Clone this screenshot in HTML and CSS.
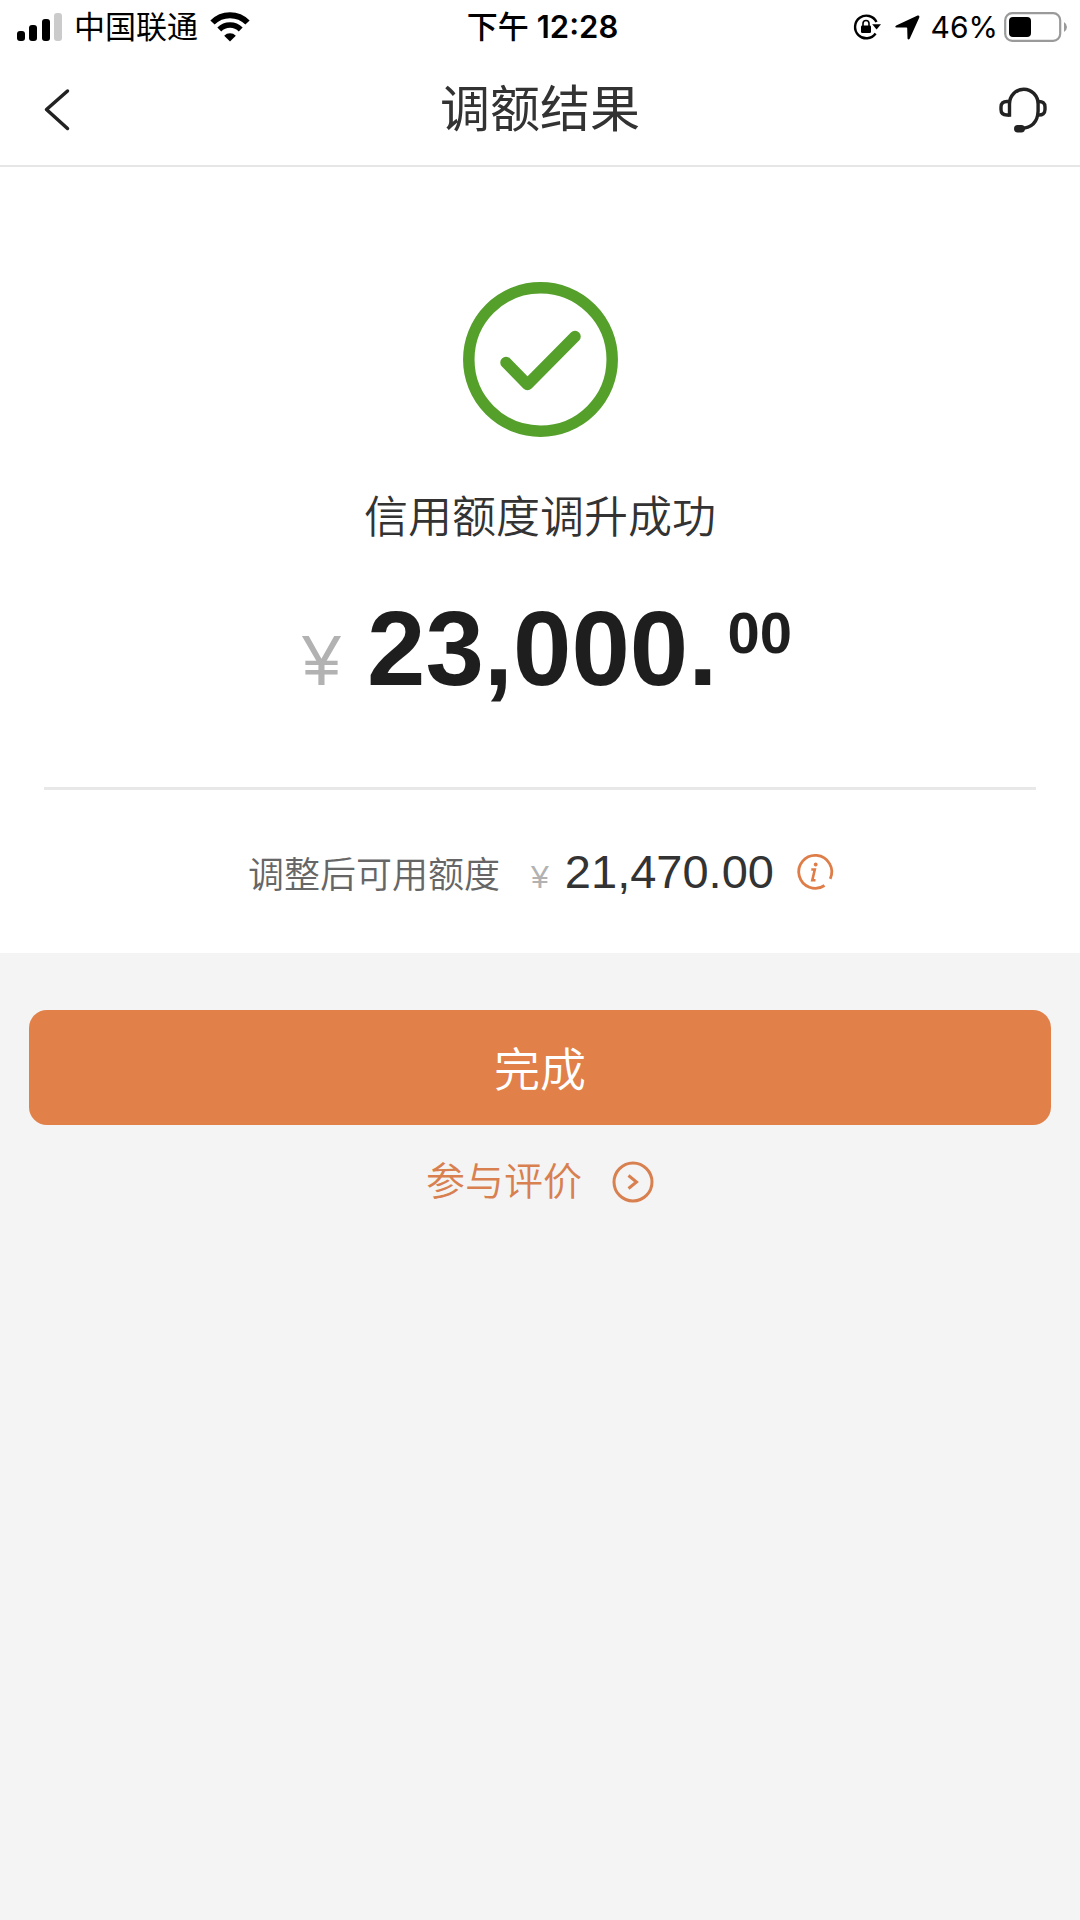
FILE: index.html
```html
<!DOCTYPE html>
<html lang="zh-CN">
<head>
<meta charset="utf-8">
<meta name="viewport" content="width=device-width, initial-scale=1">
<title>调额结果</title>
<link rel="stylesheet" href="styles.css">
</head>
<body>
<div class="status-bar">
  <div class="status-left">
    <svg class="signal" viewBox="0 0 45 28" width="45" height="28" aria-hidden="true">
      <rect x="0" y="18" width="8" height="10" rx="3"/>
      <rect x="12" y="12" width="8" height="16" rx="3"/>
      <rect x="25" y="6" width="8" height="22" rx="3"/>
      <rect x="37" y="0" width="8" height="28" rx="3" fill="#cbcbcb"/>
    </svg>
    <span class="carrier">中国联通</span>
    <svg class="wifi" viewBox="0 0 40 30" width="40" height="30" aria-hidden="true">
      <path d="M2.500 10.500A24.500 24.500 0 0 1 37.500 10.500" fill="none" stroke="#000" stroke-width="6"/>
      <path d="M9.300 17.500A15 15 0 0 1 30.700 17.500" fill="none" stroke="#000" stroke-width="5.500"/>
      <path d="M20 29.500L14.200 23.700A8.200 8.200 0 0 1 25.800 23.700Z"/>
    </svg>
  </div>
  <div class="time"><span>下午</span><span class="clock">12:28</span></div>
  <div class="status-right">
    <svg viewBox="0 0 28 26" width="28" height="26" aria-hidden="true">
      <path d="M23.500 8A11.300 11.300 0 1 0 22.600 19.500" fill="none" stroke="#000" stroke-width="2.400"/>
      <path d="M19.200 10.300H28L23.600 15.600Z"/>
      <rect x="8" y="11.500" width="10" height="7.500" rx="1.200"/>
      <path d="M10 12V9.500a3 3 0 0 1 6 0V12" fill="none" stroke="#000" stroke-width="1.600"/>
    </svg>
    <svg class="location" viewBox="0 0 25 25" width="25" height="25" aria-hidden="true">
      <path d="M1.200 10.400L22.600 .6Q24.900 0 24.300 2.400L14.700 23.800Q13.200 25.400 12.500 23.400L12.200 13.300Q12.200 12.600 11.500 12.600L1.500 12.400Q-.8 11.800 1.200 10.400Z"/>
    </svg>
    <span class="percent">46%</span>
    <svg class="battery" viewBox="0 0 64 30" width="64" height="30" aria-hidden="true">
      <rect x="1.200" y="1.200" width="55" height="27.600" rx="7" fill="none" stroke="#9a9a9a" stroke-width="2.200"/>
      <rect x="5" y="5" width="22" height="20" rx="4"/>
      <path d="M60 10Q63 12 63 15T60 20Z" fill="#9a9a9a"/>
    </svg>
  </div>
</div>

<header class="nav">
  <button class="nav-button" type="button" aria-label="返回">
    <svg viewBox="0 0 26 42" width="26" height="42"><path d="M23.500 2L2.500 20.500L23.500 39.500" fill="none" stroke="#222" stroke-width="3.500" stroke-linecap="round" stroke-linejoin="round"/></svg>
  </button>
  <h1 class="nav-title">调额结果</h1>
  <button class="nav-button nav-service" type="button" aria-label="客服">
    <svg viewBox="0 0 48 46" width="48" height="46" fill="none" stroke="#222" stroke-width="3.400">
      <path d="M10.500 29.700V17A14.300 14.800 0 0 1 39.100 17V24Q38.500 41 21 41.500"/>
      <path d="M10.500 14.500H8Q2 14.500 2 20V22.500Q2 28 8 28H10.500"/>
      <path d="M39 14.500Q46 14 46 20V22.500Q46 28.500 39 28"/>
      <rect x="15" y="38" width="11" height="7.500" rx="3.700" fill="#222" stroke="none"/>
    </svg>
  </button>
</header>

<main>
  <section class="result">
    <svg class="success-icon" viewBox="0 0 155 155" width="155" height="155" fill="none" stroke="#559f2b" aria-hidden="true">
      <circle cx="77.500" cy="77.500" r="71.700" stroke-width="11.500"/>
      <path d="M43 80.500L64.500 102.500L112 54.500" stroke-width="11.500" stroke-linecap="round" stroke-linejoin="round"/>
    </svg>
    <p class="message">信用额度调升成功</p>
    <p class="amount"><span class="amount-currency">¥</span><strong class="amount-value">23,000.</strong><strong class="amount-cents">00</strong></p>
    <div class="available">
      <span class="available-label">调整后可用额度</span>
      <span class="available-currency">¥</span>
      <span class="available-value">21,470.00</span>
      <button class="info" type="button" aria-label="说明">
        <svg viewBox="0 0 36 36" width="36" height="36" fill="none" stroke="#df7d49">
          <path d="M34.200 24.800A16.500 16.500 0 1 0 28.500 31.500" stroke-width="2.800"/>
          <path d="M15.300 15.500H18.800L16.300 26.300H19.500" stroke-width="2.600"/>
          <circle cx="19.700" cy="10.500" r="1.900" fill="#df7d49" stroke="none"/>
        </svg>
      </button>
    </div>
  </section>

  <div class="actions">
    <button class="done" type="button">完成</button>
    <a class="review" href="#">参与评价
      <svg viewBox="0 0 42 42" width="42" height="42" fill="none" stroke="#d8804f" stroke-width="3" aria-hidden="true">
        <circle cx="21" cy="21" r="19"/>
        <path d="M16.500 14.500L24.500 21L16.500 27.500"/>
      </svg>
    </a>
  </div>
</main>
</body>
</html>
```
FILE: styles.css
```css
* {
  box-sizing: border-box;
}

body {
  margin: 0;
  background: #f4f4f4;
  color: #333;
  font-family: "Liberation Sans", "Noto Sans CJK SC", sans-serif;
  font-weight: 350;
}

h1,
p {
  margin: 0;
  font-weight: inherit;
}

button {
  padding: 0;
  border: 0;
  background: none;
  font-family: inherit;
  font-weight: inherit;
  cursor: pointer;
}

svg {
  display: block;
  flex: none;
  overflow: visible;
}

.status-bar {
  display: grid;
  grid-template-columns: 1fr auto 1fr;
  align-items: center;
  height: 54px;
  padding: 0 12px 0 17px;
  background: #fff;
  color: #000;
  font-family: Inter, "Noto Sans CJK SC", sans-serif;
  font-size: 31px;
  font-weight: 400;
  line-height: 54px;
}

.status-left,
.status-right,
.time {
  display: flex;
  align-items: center;
}

.status-left {
  gap: 12px;
}

.time {
  gap: 8px;
  font-weight: 500;
}

.clock {
  font-weight: 600;
}

.status-right {
  justify-content: flex-end;
}

.location {
  margin: 0 11px 0 14px;
}

.percent {
  font-size: 30px;
}

.battery {
  margin-left: 6px;
}

.nav {
  display: flex;
  align-items: center;
  justify-content: space-between;
  height: 113px;
  padding: 0 33px;
  border-bottom: 2px solid #e6e6e6;
  background: #fff;
}

.nav-button {
  display: flex;
  justify-content: center;
  width: 48px;
}

.nav-title {
  font-size: 50px;
  font-weight: 400;
  line-height: 72px;
}

.result {
  padding: 115px 44px 0;
  background: #fff;
}

.success-icon {
  margin: 0 auto;
}

.message {
  margin-top: 49px;
  font-size: 44px;
  line-height: 64px;
  text-align: center;
}

.amount {
  display: flex;
  align-items: baseline;
  justify-content: center;
  padding: 39px 0 66px 14px;
  border-bottom: 3px solid #e8e8e8;
  color: #1e1e1e;
  line-height: 120px;
}

.amount-currency {
  margin-right: 26px;
  color: #b2b2b2;
  font-size: 70px;
}

.amount-value {
  font-size: 105px;
  font-weight: 700;
}

.amount-cents {
  align-self: flex-start;
  margin-left: 10px;
  font-size: 58px;
  font-weight: 700;
  line-height: 88px;
}

.available {
  display: flex;
  align-items: baseline;
  justify-content: center;
  height: 163px;
  line-height: 163px;
}

.available-label {
  color: #666;
  font-size: 36px;
}

.available-currency {
  margin: 0 16px 0 31px;
  color: #b2b2b2;
  font-size: 32px;
}

.available-value {
  font-size: 47px;
}

.info {
  align-self: center;
  margin-left: 22px;
}

.actions {
  display: flex;
  flex-direction: column;
  align-items: center;
  padding: 57px 29px;
}

.done {
  width: 100%;
  height: 115px;
  padding-bottom: 4px;
  border-radius: 18px;
  background: #e18049;
  color: #fff;
  font-size: 46px;
}

.review {
  display: flex;
  align-items: center;
  gap: 30px;
  margin-top: 28px;
  color: #d8804f;
  font-size: 39px;
  line-height: 58px;
  text-decoration: none;
}
```
